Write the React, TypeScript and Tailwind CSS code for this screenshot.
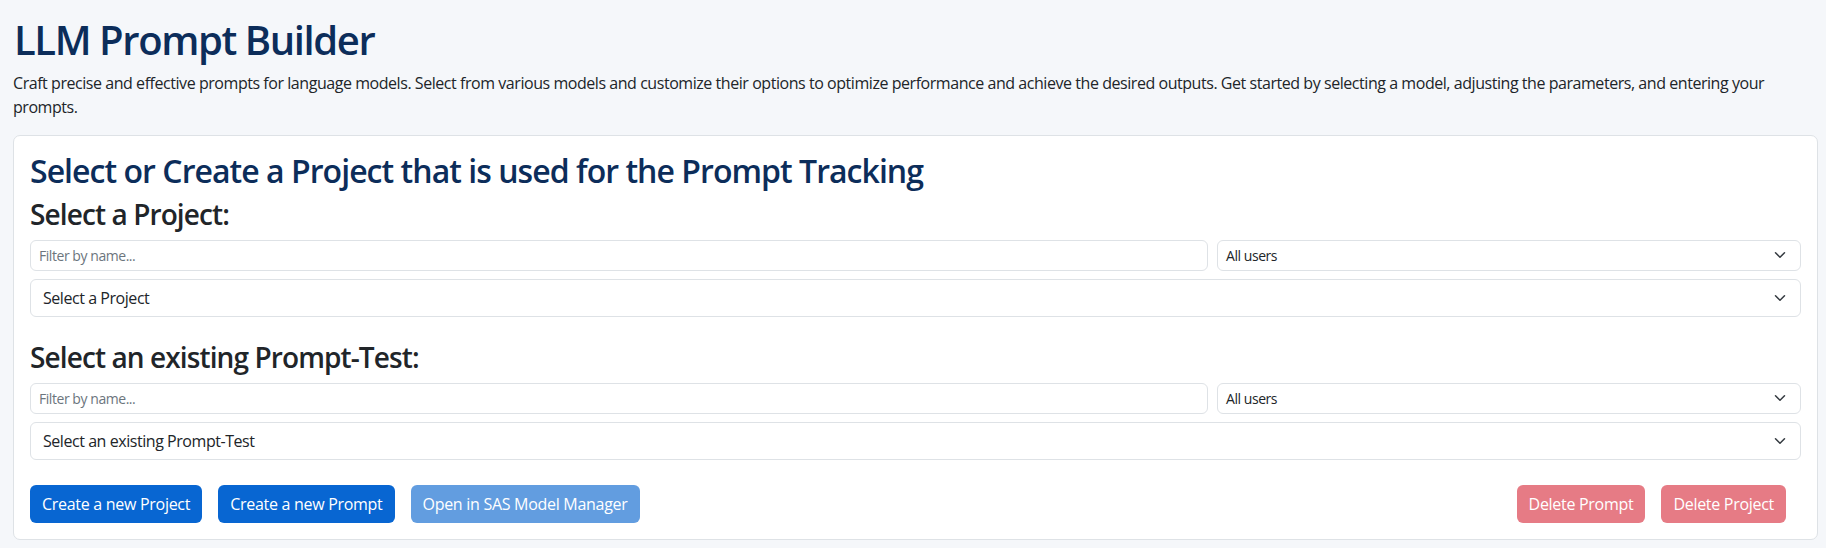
import { ChangeEvent, useState } from 'react';

const fontStack = "font-['Open_Sans','Noto_Sans',sans-serif] tracking-[-0.028em]";
const buttonBase = 'h-[38px] rounded-[6px] px-[12px] text-[16px] tracking-[-0.018em] text-white';

function Chevron() {
  return (
    <svg width="16" height="12" viewBox="0 0 16 16" className="shrink-0" aria-hidden="true">
      <path d="m2 5 6 6 6-6" fill="none" stroke="#343a40" strokeWidth="2" strokeLinecap="round" strokeLinejoin="round" />
    </svg>
  );
}

interface SelectBoxProps {
  label: string;
  small?: boolean;
}

function SelectBox({ label, small = false }: SelectBoxProps) {
  return (
    <div
      className={
        small
          ? 'flex h-[31px] items-center justify-between rounded-[6px] border border-[#dee2e6] bg-white pl-[8px] pr-[12px] text-[14px] text-[#212529]'
          : 'flex h-[38px] items-center justify-between rounded-[6px] border border-[#dee2e6] bg-white pl-[12px] pr-[12px] text-[16px] text-[#212529]'
      }
    >
      <span>{label}</span>
      <Chevron />
    </div>
  );
}

interface PickerProps {
  heading: string;
  placeholder: string;
}

function Picker({ heading, placeholder }: PickerProps) {
  const [filter, setFilter] = useState('');

  return (
    <section>
      <h3 className="mb-[8px] text-[28px] leading-[1.2] font-semibold tracking-[-0.032em] text-[#212529]">{heading}:</h3>
      <div className="grid grid-cols-[1fr_584px] gap-[9px]">
        <input
          value={filter}
          onChange={(e: ChangeEvent<HTMLInputElement>) => setFilter(e.target.value)}
          placeholder="Filter by name..."
          className="h-[31px] rounded-[6px] border border-[#dee2e6] bg-white px-[8px] text-[14px] text-[#212529] outline-none placeholder:text-[#6c757d]"
        />
        <SelectBox label="All users" small />
      </div>
      <div className="mt-[8px]">
        <SelectBox label={placeholder} />
      </div>
    </section>
  );
}

export default function App() {
  return (
    <div className={`min-h-screen bg-[#f5f7fa] pt-[16px] pr-[8px] pb-[10px] pl-[13px] text-[#212529] ${fontStack}`}>
      <h1 className="mb-[7px] pl-[1px] text-[40px] leading-[1.2] font-semibold tracking-[-0.035em] text-[#0c2d5a]">
        LLM Prompt Builder
      </h1>
      <p className="mb-[16px] text-[16px] leading-[24px]">
        Craft precise and effective prompts for language models. Select from various models and customize their options to
        optimize performance and achieve the desired outputs. Get started by selecting a model, adjusting the parameters, and
        entering your prompts.
      </p>

      <div className="rounded-[7px] border border-[#dee2e6] bg-white p-[16px]">
        <h2 className="mb-[8px] text-[32px] leading-[1.2] font-semibold tracking-[-0.03em] text-[#0c2d5a]">
          Select or Create a Project that is used for the Prompt Tracking
        </h2>

        <Picker heading="Select a Project" placeholder="Select a Project" />

        <div className="mt-[24px]">
          <Picker heading="Select an existing Prompt-Test" placeholder="Select an existing Prompt-Test" />
        </div>

        <div className="mt-[25px] flex items-center justify-between">
          <div className="flex gap-[16px]">
            <button className={`${buttonBase} bg-[#0866d2]`}>Create a new Project</button>
            <button className={`${buttonBase} bg-[#0866d2]`}>Create a new Prompt</button>
            <button disabled className={`${buttonBase} bg-[#629de0]`}>
              Open in SAS Model Manager
            </button>
          </div>
          <div className="flex gap-[16px] pr-[15px]">
            <button disabled className={`${buttonBase} bg-[#e67b85]`}>
              Delete Prompt
            </button>
            <button disabled className={`${buttonBase} bg-[#e67b85]`}>
              Delete Project
            </button>
          </div>
        </div>
      </div>
    </div>
  );
}
